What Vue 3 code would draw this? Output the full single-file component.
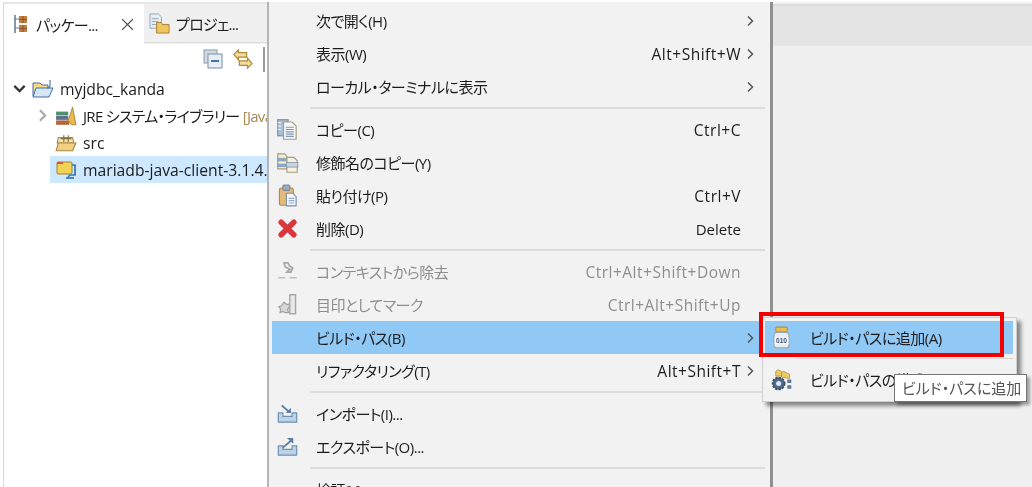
<script setup>
const icons = {
  copy: '<rect x="1.500" y="1.500" width="9" height="14" fill="#a9c1d8" stroke="#7b8d9f"/><path d="M1.500 4h3M1.500 7h3M1.500 10h3" stroke="#e8eef4"/><path d="M6.500 3.500h7.500l3.500 3.500v11.500h-11z" fill="#f4f6f8" stroke="#a79c7e"/><path d="M8.500 8h7M8.500 10h7M8.500 12h7M8.500 14h7M8.500 16h7" stroke="#7f9ab5"/>',
  qual: '<path d="M1.500 2.500h6l2 2v11h-8z" fill="#f7ecd0" stroke="#a79c7e"/><rect x="1" y="6" width="8" height="3" fill="#8aa6c2"/><rect x="1" y="11" width="8" height="3" fill="#8aa6c2"/><path d="M9.500 5.500h6l3 3v10h-9z" fill="#f8f1de" stroke="#a79c7e"/><rect x="9" y="10" width="10" height="4" fill="#c7d5e3" stroke="#7f93a8" stroke-width=".7"/>',
  paste: '<rect x="3" y="3.500" width="12" height="15" rx="1.500" fill="#e4bb7a" stroke="#a98a5a"/><rect x="6" y="1" width="6" height="4.500" rx="1" fill="#9fadba" stroke="#7d8a97"/><path d="M9 8h5.500l3 3v8H9z" fill="#f4f6f9" stroke="#7f8f9f"/><path d="M11 12.500h5M11 14.500h5M11 16.500h5" stroke="#8fb0d0"/>',
  del: '<path d="M4.500 4.500L15.500 15.500M15.500 4.500L4.500 15.500" stroke="#d8383c" stroke-width="4.800" stroke-linecap="round"/>',
  ctx: '<path d="M7 2.500h3.500l1 2.500 3 2-1.500 3.500H9.500L12 8 8 6z" fill="none" stroke="#a8a8a8" stroke-width="1.500"/><path d="M2 15.500h6M12 15.500h6" stroke="#bdbdbd" stroke-width="1.300"/>',
  mark: '<rect x="12" y="1.500" width="5" height="16.500" fill="#e8e8e8" stroke="#a5a5a5" stroke-width="1.200"/><path d="M7 8l2.500 2 2-.5v3l-1.500 2 1 2.500H8l-2-1-2.500 1 .5-3-1.500-2L5 11z" fill="#d8d8d8" stroke="#a0a0a0"/>',
  imp: '<path d="M2 9.500h4v3h8v-3h4v8H2z" fill="#bcd2e6" stroke="#6f8fb0"/><path d="M5 3l7 6" stroke="#5a7fa5" stroke-width="1.600"/><path d="M8.500 9.500H13V5z" fill="#5a7fa5"/>',
  exp: '<path d="M2 9.500h4v3h8v-3h4v8H2z" fill="#bcd2e6" stroke="#6f8fb0"/><path d="M6 11l7-6" stroke="#5a7fa5" stroke-width="1.600"/><path d="M9.500 2.500H15v5z" fill="#5a7fa5"/>',
  jar: '<rect x="5" y="1" width="10" height="4" rx="1" fill="#e8bf55" stroke="#b89335"/><path d="M3.500 8q0-2.500 2.500-2.500h8q2.500 0 2.500 2.500v9q0 2-2 2H5.500q-2 0-2-2z" fill="#e9edf2" stroke="#9aa8b5"/><rect x="4" y="10" width="12" height="6" fill="#f8f9fb"/><text x="10" y="15" font-size="5.800" font-family="Liberation Sans" font-weight="700" text-anchor="middle" fill="#34557a">010</text>',
  cfg: '<path d="M5 7V3l2-1.500 3 1.500v4z" fill="#ecca68" stroke="#b99a3e" stroke-width=".8"/><path d="M10 8V4l2-1 5 2.500V9z" fill="#ecca68" stroke="#b99a3e" stroke-width=".8"/><circle cx="7.500" cy="13.500" r="5.200" fill="#4f6a8c" stroke="#34495f" stroke-width="1.500" stroke-dasharray="2 1"/><circle cx="7.500" cy="13.500" r="2.200" fill="#dfe6ee"/><path d="M15 10h3.500v3H15zM15 15h3.500v3H15z" fill="#5e7c9f"/>'
}

const rows = [
  { label: '次で開く(H)', arrow: true },
  { label: '表示(W)', key: 'Alt+Shift+W', arrow: true },
  { label: 'ローカル・ターミナルに表示', arrow: true },
  { sep: true },
  { label: 'コピー(C)', key: 'Ctrl+C', icon: 'copy' },
  { label: '修飾名のコピー(Y)', icon: 'qual' },
  { label: '貼り付け(P)', key: 'Ctrl+V', icon: 'paste' },
  { label: '削除(D)', key: 'Delete', icon: 'del' },
  { sep: true },
  { label: 'コンテキストから除去', key: 'Ctrl+Alt+Shift+Down', icon: 'ctx', off: true },
  { label: '目印としてマーク', key: 'Ctrl+Alt+Shift+Up', icon: 'mark', off: true },
  { label: 'ビルド・パス(B)', arrow: true, active: true },
  { label: 'リファクタリング(T)', key: 'Alt+Shift+T', arrow: true },
  { sep: true },
  { label: 'インポート(I)...', icon: 'imp' },
  { label: 'エクスポート(O)...', icon: 'exp' },
  { sep: true },
  { label: '検証(V)' }
]
</script>

<template>
  <div class="screen">
    <div class="pane">
      <div class="tabs">
        <div class="tab on">
          <svg class="tab-ico" viewBox="0 0 14 20">
            <path d="M1 1v18" stroke="#6d7f90" stroke-width="1.600" />
            <path d="M5 2h8v7H5zM5 11h8v7H5z" fill="#c47f3f" />
            <path d="M9 2v7M5 5.500h8M9 11v7M5 14.500h8" stroke="#8a5426" />
            <path d="M1 5h4M1 14h4" stroke="#6d7f90" />
          </svg>
          <span class="tab-txt">パッケー...</span>
          <svg class="close" viewBox="0 0 12 12"><path d="M1 1l10 10M11 1L1 11" stroke="#444" stroke-width="1.100" /></svg>
        </div>
        <div class="tab">
          <svg class="tab-ico2" viewBox="0 0 22 22">
            <path d="M1 1h9l3 3v12H1z" fill="#e9eef4" stroke="#97a5b3" />
            <path d="M3 6h7M3 9h7M3 12h6" stroke="#8ba4bd" />
            <path d="M8 10h5l1 2h7v9H8z" fill="#f2c65e" stroke="#a9802f" />
          </svg>
          <span class="tab-txt">プロジェ...</span>
        </div>
      </div>
      <div class="tools">
        <svg viewBox="0 0 20 20" class="tool">
          <rect x="1" y="1" width="13" height="13" fill="#cfd9e3" stroke="#8a9aa9" />
          <rect x="5" y="5" width="14" height="14" fill="#e8eef4" stroke="#7b8ea1" />
          <path d="M8 12h8" stroke="#3f78ab" stroke-width="2" />
        </svg>
        <svg viewBox="0 0 22 22" class="tool">
          <path d="M1 6l5-5v3h9v5H6v3z" fill="#f3dc9b" stroke="#b08a35" stroke-width="1.300" />
          <path d="M21 16l-5 5v-3H7v-5h9v-3z" fill="#f3dc9b" stroke="#b08a35" stroke-width="1.300" />
        </svg>
        <i class="tool-bar"></i>
      </div>
      <div class="tree">
        <div class="node top">
          <svg class="chev" viewBox="0 0 10 10"><path d="M1 3l4 4 4-4" fill="none" stroke="#333" stroke-width="1.700" /></svg>
          <svg class="node-ico" viewBox="0 0 22 20">
            <path d="M1 4h7l2 2h6v11H1z" fill="#f4d98a" stroke="#486f9d" />
            <path d="M4 9h17l-4 9H1z" fill="#d7e6f6" stroke="#3f6ea6" />
            <path d="M18 1v6q0 2-3 2" fill="none" stroke="#4d7ea8" stroke-width="1.200" />
          </svg>
          <span>myjdbc_kanda</span>
        </div>
        <div class="node lvl">
          <svg class="chev" viewBox="0 0 10 10"><path d="M3 1l4 4-4 4" fill="none" stroke="#aaa" stroke-width="1.700" /></svg>
          <svg class="node-ico" viewBox="0 0 20 18">
            <rect x="1" y="5" width="11" height="3.500" fill="#4e8f6c" />
            <rect x="1" y="9" width="11" height="3.500" fill="#5a7090" />
            <rect x="1" y="13" width="12" height="4" fill="#b0683b" />
            <path d="M12 13l4-12 3 16h-4z" fill="#eab94f" stroke="#a67f2a" stroke-width=".8" />
          </svg>
          <span class="jre">JRE システム・ライブラリー <em>[Java]</em></span>
        </div>
        <div class="node lvl">
          <i class="chev"></i>
          <svg class="node-ico" viewBox="0 0 20 18">
            <path d="M3 4h13l1 5H2z" fill="#f6e3b2" stroke="#a98a45" />
            <path d="M8 2v6M12 2v6M5 5h10" stroke="#8c6f35" />
            <path d="M3 9h16l-3 7H1z" fill="#f0cf83" stroke="#a98a45" />
          </svg>
          <span>src</span>
        </div>
        <div class="node lvl sel">
          <i class="chev"></i>
          <svg class="node-ico" viewBox="0 0 20 20">
            <rect x="1" y="2" width="15" height="12" rx="1" fill="#f2d155" stroke="#9b8330" />
            <rect x="1" y="2" width="6" height="2" fill="#d8583e" />
            <path d="M16 5h3v10h-5l-2 2" fill="none" stroke="#2f78bb" stroke-width="1.700" />
            <path d="M10 18h8" stroke="#2f78bb" stroke-width="1.700" />
          </svg>
          <span>mariadb-java-client-3.1.4.jar</span>
        </div>
      </div>
    </div>

    <div class="menu">
      <template v-for="(row, i) in rows" :key="i">
        <div v-if="row.sep" class="sep"></div>
        <div v-else class="row" :class="{ off: row.off, active: row.active }">
          <span class="gut">
            <svg v-if="row.icon" viewBox="0 0 20 20" v-html="icons[row.icon]"></svg>
          </span>
          <span class="label">{{ row.label }}</span>
          <span class="key" :class="{ tight: row.key === 'Delete' }">{{ row.key }}</span>
          <svg class="arrow" viewBox="0 0 8 12">
            <path v-if="row.arrow" d="M1.500 1.500L6 6l-4.500 4.500" fill="none" stroke="#555" stroke-width="1.500" />
          </svg>
        </div>
      </template>

      <div class="submenu">
        <div class="row sub active">
          <span class="gut"><svg viewBox="0 0 20 20" v-html="icons.jar"></svg></span>
          <span class="label">ビルド・パスに追加(A)</span>
        </div>
        <div class="sub-sep"></div>
        <div class="row sub">
          <span class="gut"><svg viewBox="0 0 20 20" v-html="icons.cfg"></svg></span>
          <span class="label">ビルド・パスの構成...</span>
        </div>
        <div class="mark"></div>
      </div>
      <div class="tip">ビルド・パスに追加</div>
    </div>

    <div class="editor">
      <div class="editor-tabs"></div>
    </div>
  </div>
</template>

<style scoped>
.screen {
  position: relative;
  display: flex;
  width: 1032px;
  height: 487px;
  padding-top: 2px;
  box-sizing: border-box;
  overflow: hidden;
  background: #fff;
  color: #1c1c1c;
  font-family: "Open Sans", "Noto Sans CJK JP", sans-serif;
  font-size: 15px;
  font-feature-settings: "palt";
  filter: blur(0.4px);
}

.pane {
  width: 264px;
  margin-left: 3px;
  background: #fff;
  flex: none;
  box-sizing: border-box;
  border-left: 1px solid #d6d6d6;
  border-top: 2px solid #e6e6e6;
}

.tabs {
  display: flex;
  height: 40px;
  background: #f0f0f0;
}

.tab {
  display: flex;
  align-items: center;
  height: 39px;
  flex: 1;
  padding-left: 5px;
  box-sizing: border-box;
  border-bottom: 1px solid #dcdcdc;
}

.tab.on {
  flex: none;
  width: 140px;
  padding-left: 10px;
  background: #fff;
  border-bottom: 0;
  height: 40px;
}

.tab-ico {
  width: 14px;
  height: 20px;
  margin-right: 8px;
}

.tab-ico2 {
  width: 21px;
  height: 21px;
  margin-right: 6px;
}

.tab-txt {
  font-size: 15px;
  letter-spacing: -0.7px;
}

.close {
  width: 13px;
  height: 13px;
  margin-left: auto;
  margin-right: 10px;
}

.tools {
  display: flex;
  align-items: center;
  justify-content: flex-end;
  gap: 10px;
  height: 30px;
  padding-right: 2px;
}

.tool {
  width: 20px;
  height: 20px;
}

.tool-bar {
  width: 2px;
  height: 25px;
  background: #999;
}

.tree {
  padding-top: 1px;
}

.node {
  display: flex;
  align-items: center;
  height: 27px;
  font-size: 15.700px;
  white-space: nowrap;
  overflow: hidden;
}

.node.top {
  padding-left: 9px;
}

.node.lvl {
  padding-left: 32px;
}

.chev {
  display: block;
  width: 13px;
  height: 13px;
  flex: none;
}

.node-ico {
  width: 22px;
  height: 20px;
  margin: 0 6px 0 6px;
  flex: none;
}

.jre {
  font-size: 15px;
  letter-spacing: -0.7px;
}

.node em {
  font-style: normal;
  color: #a98a55;
}

.node.sel {
  margin-left: 46px;
  padding-left: 0;
  background: #cde8ff;
}

.node.sel .chev {
  display: none;
}

.node.sel .node-ico {
  margin-left: 5px;
}

.menu {
  position: relative;
  width: 506px;
  flex: none;
  padding: 2px 0 0 3px;
  box-sizing: border-box;
  background: #f2f2f2;
  border-left: 2px solid #b5b5b5;
  border-right: 3px solid #8f8f8f;
}

.row {
  display: flex;
  align-items: center;
  height: 33px;
}

.row.active {
  background: #90c8f6;
}

.row.off {
  color: #8e8e8e;
}

.gut {
  display: flex;
  justify-content: center;
  align-items: center;
  width: 30px;
  height: 100%;
  flex: none;
  margin-right: 14px;
}

.gut svg {
  width: 23px;
  height: 23px;
}

.label {
  flex: 1;
  white-space: nowrap;
  letter-spacing: -0.5px;
}

.key {
  font-size: 15.500px;
  letter-spacing: 0.5px;
  margin-right: 5px;
}

.key.tight {
  letter-spacing: 0;
  font-size: 15px;
}

.arrow {
  width: 9px;
  height: 12px;
  margin-right: 15px;
  flex: none;
}

.sep {
  height: 10px;
  margin-left: 38px;
  position: relative;
}

.sep::after {
  content: "";
  position: absolute;
  left: 0;
  right: 5px;
  top: 4px;
  height: 2px;
  background: #dcdcdc;
}

.submenu {
  position: absolute;
  left: 493px;
  top: 315px;
  width: 255px;
  height: 85px;
  padding: 3px 3px 0 2px;
  box-sizing: border-box;
  background: #f2f2f2;
  border: 1px solid #cfcfcf;
  box-shadow: 4px 4px 4px rgba(0, 0, 0, 0.45);
}

.sub .gut {
  width: 32px;
  margin-right: 13px;
}

.sub-sep {
  height: 1px;
  margin: 4px 0 4px 32px;
  background: #d5d5d5;
}

.mark {
  position: absolute;
  left: -4px;
  top: -6px;
  width: 245px;
  height: 45px;
  border: 4px solid #f20000;
  box-sizing: border-box;
}

.tip {
  position: absolute;
  left: 625px;
  top: 372px;
  width: 133px;
  height: 28px;
  line-height: 26px;
  padding-left: 7px;
  box-sizing: border-box;
  color: #555;
  background: #fff;
  border: 1px solid #767676;
  box-shadow: 3px 3px 3px rgba(0, 0, 0, 0.35);
  white-space: nowrap;
}

.editor {
  flex: 1;
  background: #f0f0f0;
}

.editor-tabs {
  height: 40px;
  margin-top: 2px;
  background: #e4e4e4;
  border-top: 2px solid #dcdcdc;
}
</style>
